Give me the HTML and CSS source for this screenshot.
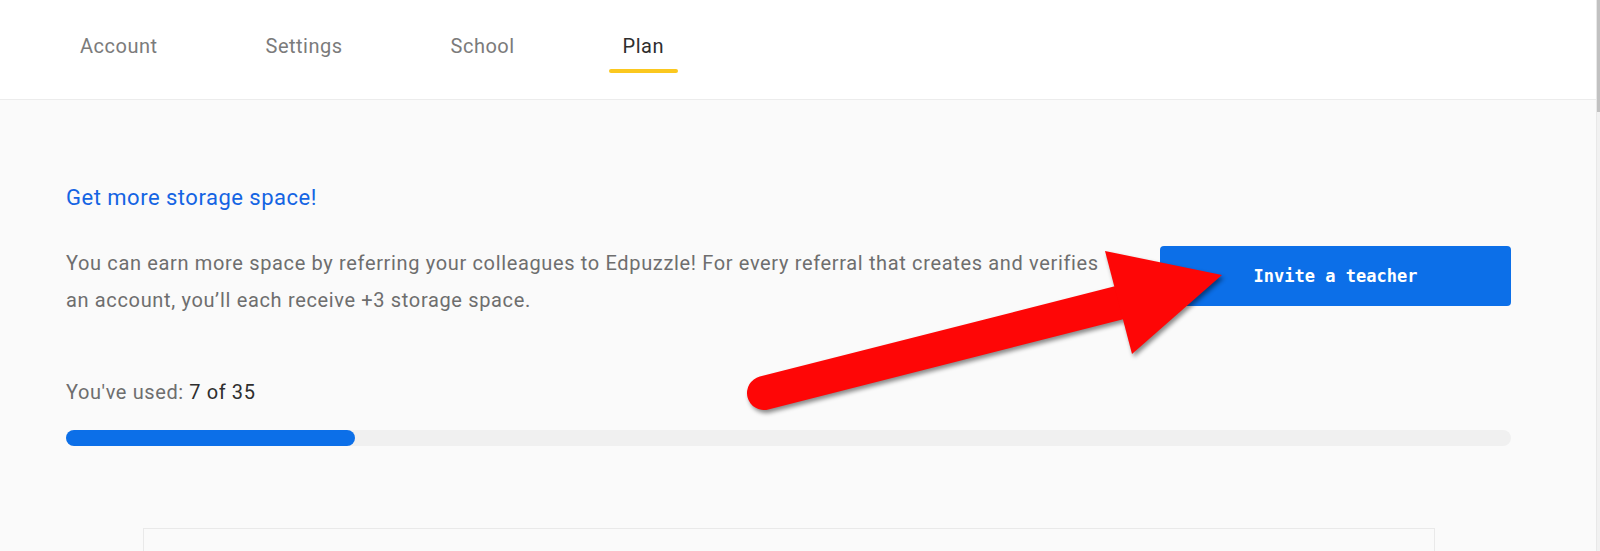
FILE: index.html
```html
<!DOCTYPE html>
<html lang="en">
<head>
  <meta charset="UTF-8">
  <meta name="viewport" content="width=device-width, initial-scale=1.0">
  <title>Plan</title>
  <link rel="stylesheet" href="styles.css">
</head>
<body>
  <div class="page">
    <nav class="tabs">
      <a class="tab">Account</a>
      <a class="tab">Settings</a>
      <a class="tab">School</a>
      <a class="tab active">Plan</a>
    </nav>

    <main class="content">
      <h2>Get more storage space!</h2>
      <div class="referral">
        <p>You can earn more space by referring your colleagues to Edpuzzle! For every referral that creates and verifies an account, you&rsquo;ll each receive +3 storage space.</p>
        <button type="button">Invite a teacher</button>
      </div>

      <div class="usage">You've used: <span>7 of 35</span></div>
      <div class="progress"><div class="bar" style="width: 20%"></div></div>

      <div class="card"></div>
    </main>
  </div>

  <div class="scrollbar"><div class="thumb"></div></div>

  <svg class="arrow" width="1600" height="551" viewBox="0 0 1600 551">
    <line x1="764" y1="393" x2="1118" y2="303" stroke="#fe0606" stroke-width="34" stroke-linecap="round"/>
    <polygon points="1105,251 1222,275 1132,354" fill="#fe0606"/>
  </svg>
</body>
</html>
```

FILE: styles.css
```css
* {
  box-sizing: border-box;
}

html, body {
  height: 100%;
}

body {
  margin: 0;
  overflow: hidden;
  font-family: Roboto, "Liberation Sans", sans-serif;
  background-color: #fafafa;
  color: #6e6e6e;
}

.page {
  width: calc(100% - 4px);
  min-height: 100%;
}

.tabs {
  display: flex;
  gap: 80px;
  height: 100px;
  padding: 33px 0 0 66px;
  background-color: #fff;
  border-bottom: 1px solid #ececec;

  .tab {
    display: flex;
    flex-direction: column;
    align-items: stretch;
    padding: 0 14px;
    font-size: 20px;
    line-height: 26px;
    letter-spacing: 0.5px;
    color: #7b7b7b;
    cursor: pointer;
  }

  .tab.active {
    color: #2e2e2e;
  }

  .tab.active::after {
    content: "";
    height: 4px;
    margin: 10px -14px 0;
    border-radius: 2px;
    background-color: #fbc81f;
  }
}

.content {
  width: 1445px;
  margin-left: 66px;
  padding-top: 83px;

  h2 {
    margin: 0;
    font-size: 22px;
    font-weight: 400;
    line-height: 30px;
    letter-spacing: 0.5px;
    color: #1464e3;
  }

  .referral {
    display: flex;
    gap: 34px;
    margin-top: 32px;
  }

  p {
    flex: 1;
    margin: 0;
    font-size: 20px;
    line-height: 37px;
    letter-spacing: 0.65px;
  }

  button {
    width: 351px;
    height: 60px;
    margin-top: 1px;
    border: 0;
    border-radius: 4px;
    background-color: #0c6fe8;
    color: #fff;
    font-family: "DejaVu Sans Mono", "Liberation Mono", monospace;
    font-size: 17px;
    font-weight: 700;
    cursor: pointer;
  }
}

.usage {
  margin-top: 58px;
  font-size: 20px;
  line-height: 30px;
  letter-spacing: 0.6px;

  span {
    color: #2e2e2e;
  }
}

.progress {
  height: 16px;
  margin-top: 23px;
  border-radius: 8px;
  background-color: #f0f0f0;

  .bar {
    height: 100%;
    border-radius: 8px;
    background-color: #0c6fe8;
  }
}

.card {
  width: 1292px;
  height: 120px;
  margin: 82px auto 0;
  border: 1px solid #e9e9e9;
  background-color: #fafafa;
}

.scrollbar {
  position: fixed;
  top: 0;
  right: 0;
  width: 4px;
  height: 100%;
  background-color: #f1f1f1;
  border-left: 1px solid #e8e8e8;

  .thumb {
    height: 112px;
    background-color: #c1c1c1;
  }
}

.arrow {
  position: absolute;
  top: 0;
  left: 0;
  pointer-events: none;
  filter: drop-shadow(2px 3px 2px rgba(0, 0, 0, 0.45));
}
```
